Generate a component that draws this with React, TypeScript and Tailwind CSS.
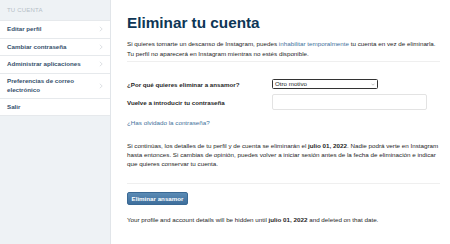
import React from "react";

const items = [
  "Editar perfil",
  "Cambiar contraseña",
  "Administrar aplicaciones",
  "Preferencias de correo electrónico",
];

function Chevron() {
  return (
    <svg width="4" height="6" viewBox="0 0 4 6" className="shrink-0">
      <path d="M0.8 0.8 L3.2 3 L0.8 5.2" fill="none" stroke="#d5d9dd" strokeWidth="0.8" />
    </svg>
  );
}

export default function App() {
  return (
    <div
      className="flex w-[450px] h-[244px] bg-white overflow-hidden text-[#262626]"
      style={{ fontFamily: '"Liberation Sans", Arial, sans-serif' }}
    >
      <aside className="w-[111px] shrink-0 bg-[#eef2f5] border-r border-[#e1e5e9] flex flex-col">
        <div className="h-[20px] flex items-center pl-[7px] text-[6px] text-[#b5bec7] tracking-[0.2px]">
          TU CUENTA
        </div>
        {items.map((t, i) => (
          <div
            key={t}
            className={`bg-white border-t border-[#e6e9ec] flex items-center justify-between pl-[7px] pr-[7px] ${
              i === 3 ? "h-[25px]" : "h-[17.5px]"
            }`}
          >
            <span className="text-[6.2px] font-bold text-[#35506b] leading-[8.5px] w-[80px]">{t}</span>
            <Chevron />
          </div>
        ))}
        <div className="bg-white border-t border-b border-[#e6e9ec] h-[18px] flex items-center pl-[7px]">
          <span className="text-[6.2px] font-bold text-[#35506b]">Salir</span>
        </div>
      </aside>
      <main className="flex-1 pl-[16px] pr-[10px] pt-[13px]">
        <h1 className="text-[15.3px] font-bold text-[#0e3656] leading-[20px]">Eliminar tu cuenta</h1>
        <p className="mt-[6px] text-[6.25px] leading-[9.5px] text-[#262626]">
          Si quieres tomarte un descanso de Instagram, puedes{" "}
          <span className="text-[#3f729b]">inhabilitar temporalmente</span> tu cuenta en vez de eliminarla.
          <br />
          Tu perfil no aparecerá en Instagram mientras no estés disponible.
        </p>
        <div className="mt-[3px] border-t border-[#efefef]" />
        <div className="mt-[17px] flex items-center h-[10px]">
          <span className="w-[145px] text-[6.2px] leading-[9px] font-bold text-[#262626]">¿Por qué quieres eliminar a ansamor?</span>
          <div className="w-[106px] h-[10px] border border-[#333] rounded-[1.5px] flex items-center justify-between px-[2px] text-[6.2px] leading-[8px] text-[#262626]">
            <span>Otro motivo</span>
            <svg width="4" height="3" viewBox="0 0 4 3">
              <path d="M0.5 0.7 L2 2.2 L3.5 0.7" fill="none" stroke="#999" strokeWidth="0.6" />
            </svg>
          </div>
        </div>
        <div className="mt-[5px] flex items-center h-[16px]">
          <span className="w-[145px] text-[6.2px] leading-[9px] font-bold text-[#262626]">Vuelve a introducir tu contraseña</span>
          <div className="w-[155px] h-[16px] border border-[#e3e3e3] rounded-[2px] bg-white" />
        </div>
        <div className="mt-[8px] text-[6.25px] leading-[9px] text-[#3f729b]">¿Has olvidado la contraseña?</div>
        <p className="mt-[14px] text-[6.25px] leading-[9px] text-[#262626]">
          Si continúas, los detalles de tu perfil y de cuenta se eliminarán el <b>julio 01, 2022</b>. Nadie podrá verte en Instagram hasta entonces. Si cambias de opinión, puedes volver a iniciar sesión antes de la fecha de eliminación e indicar que quieres conservar tu cuenta.
        </p>
        <div className="mt-[15px] border-t border-[#efefef]" />
        <button className="mt-[8px] w-[61px] h-[13px] rounded-[2px] bg-gradient-to-b from-[#5b8bb5] to-[#3e6f9c] border border-[#3a6994] text-white text-[6.2px] leading-[9px] font-bold flex items-center justify-center">
          Eliminar ansamor
        </button>
        <p className="mt-[10px] text-[6.25px] leading-[9px] text-[#262626]">
          Your profile and account details will be hidden until <b>julio 01, 2022</b> and deleted on that date.
        </p>
      </main>
    </div>
  );
}
